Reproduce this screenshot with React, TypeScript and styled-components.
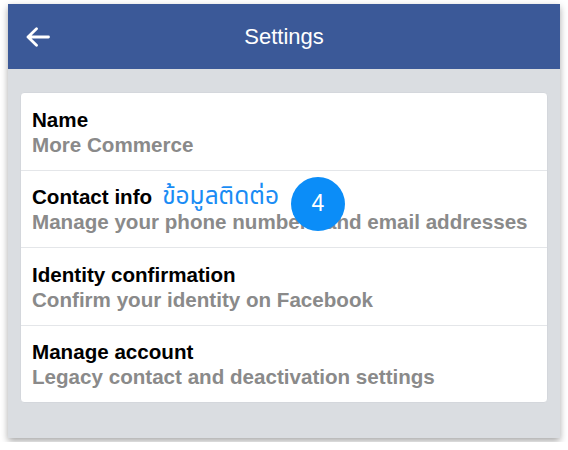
import styled, { createGlobalStyle } from 'styled-components';

const GlobalStyle = createGlobalStyle`
  html, body {
    margin: 0;
    padding: 0;
    background: #ffffff;
  }
  body {
    font-family: "Liberation Sans", Arial, "Noto Sans", sans-serif;
  }
`;

const Frame = styled.div`
  width: 552px;
  height: 434px;
  margin: 4px 8px;
  background: #dadde1;
  box-shadow: 0 3px 7px rgba(0, 0, 0, 0.35);
  display: flex;
  flex-direction: column;
  overflow: hidden;
`;

const Header = styled.header`
  height: 65px;
  flex-shrink: 0;
  background: #3b5998;
  display: flex;
  align-items: center;
  position: relative;
  padding: 0 18px;
`;

const BackButton = styled.button`
  background: none;
  border: 0;
  padding: 0;
  display: flex;
  align-items: center;
  z-index: 1;
`;

const Title = styled.h1`
  position: absolute;
  inset: 0;
  margin: 0;
  display: flex;
  align-items: center;
  justify-content: center;
  color: #ffffff;
  font-size: 22px;
  font-weight: 400;
`;

const Body = styled.main`
  padding: 23px 12px 0;
`;

const Card = styled.section`
  background: #ffffff;
  border: 1px solid #d4d7dc;
  border-radius: 4px;
`;

const Row = styled.div<{ $last?: boolean }>`
  position: relative;
  padding: 13.5px 11px 13px;
  border-bottom: ${({ $last }) => ($last ? '0' : '1px solid #e4e6e9')};
  display: flex;
  flex-direction: column;
`;

const RowTitle = styled.div`
  display: flex;
  align-items: baseline;
  gap: 10px;
  height: 25px;
  font-size: 20.6px;
  line-height: 25px;
  font-weight: 700;
  color: #000000;
`;

const Thai = styled.span`
  font-family: "Noto Sans Thai", "Noto Sans", "DejaVu Sans", sans-serif;
  font-weight: 400;
  font-size: 24.5px;
  line-height: 25px;
  color: #1a8cf4;
`;

const RowSub = styled.div`
  font-size: 20.6px;
  line-height: 25px;
  font-weight: 700;
  color: #8a8a8a;
`;

const Badge = styled.div`
  position: absolute;
  left: 270px;
  top: 6px;
  width: 54px;
  height: 54px;
  border-radius: 50%;
  background: #0b8df8;
  color: #ffffff;
  font-size: 23px;
  display: flex;
  align-items: center;
  justify-content: center;
`;

const rows = [
  { title: 'Name', sub: 'More Commerce' },
  { title: 'Contact info', sub: 'Manage your phone numbers and email addresses', note: 'ข้อมูลติดต่อ', badge: '4' },
  { title: 'Identity confirmation', sub: 'Confirm your identity on Facebook' },
  { title: 'Manage account', sub: 'Legacy contact and deactivation settings' },
];

export default function App() {
  return (
    <>
      <GlobalStyle />
      <Frame>
        <Header>
          <BackButton aria-label="Back">
            <svg width="24" height="20" viewBox="0 0 24 20" fill="none" stroke="#fff" strokeWidth="2.8" strokeLinecap="round" strokeLinejoin="round">
              <path d="M22.5 10H2M10.5 1.8L2 10l8.5 8.2" />
            </svg>
          </BackButton>
          <Title>Settings</Title>
        </Header>
        <Body>
          <Card>
            {rows.map((r, i) => (
              <Row key={r.title} $last={i === rows.length - 1}>
                <RowTitle>
                  {r.title}
                  {r.note && <Thai>{r.note}</Thai>}
                </RowTitle>
                <RowSub>{r.sub}</RowSub>
                {r.badge && <Badge>{r.badge}</Badge>}
              </Row>
            ))}
          </Card>
        </Body>
      </Frame>
    </>
  );
}
